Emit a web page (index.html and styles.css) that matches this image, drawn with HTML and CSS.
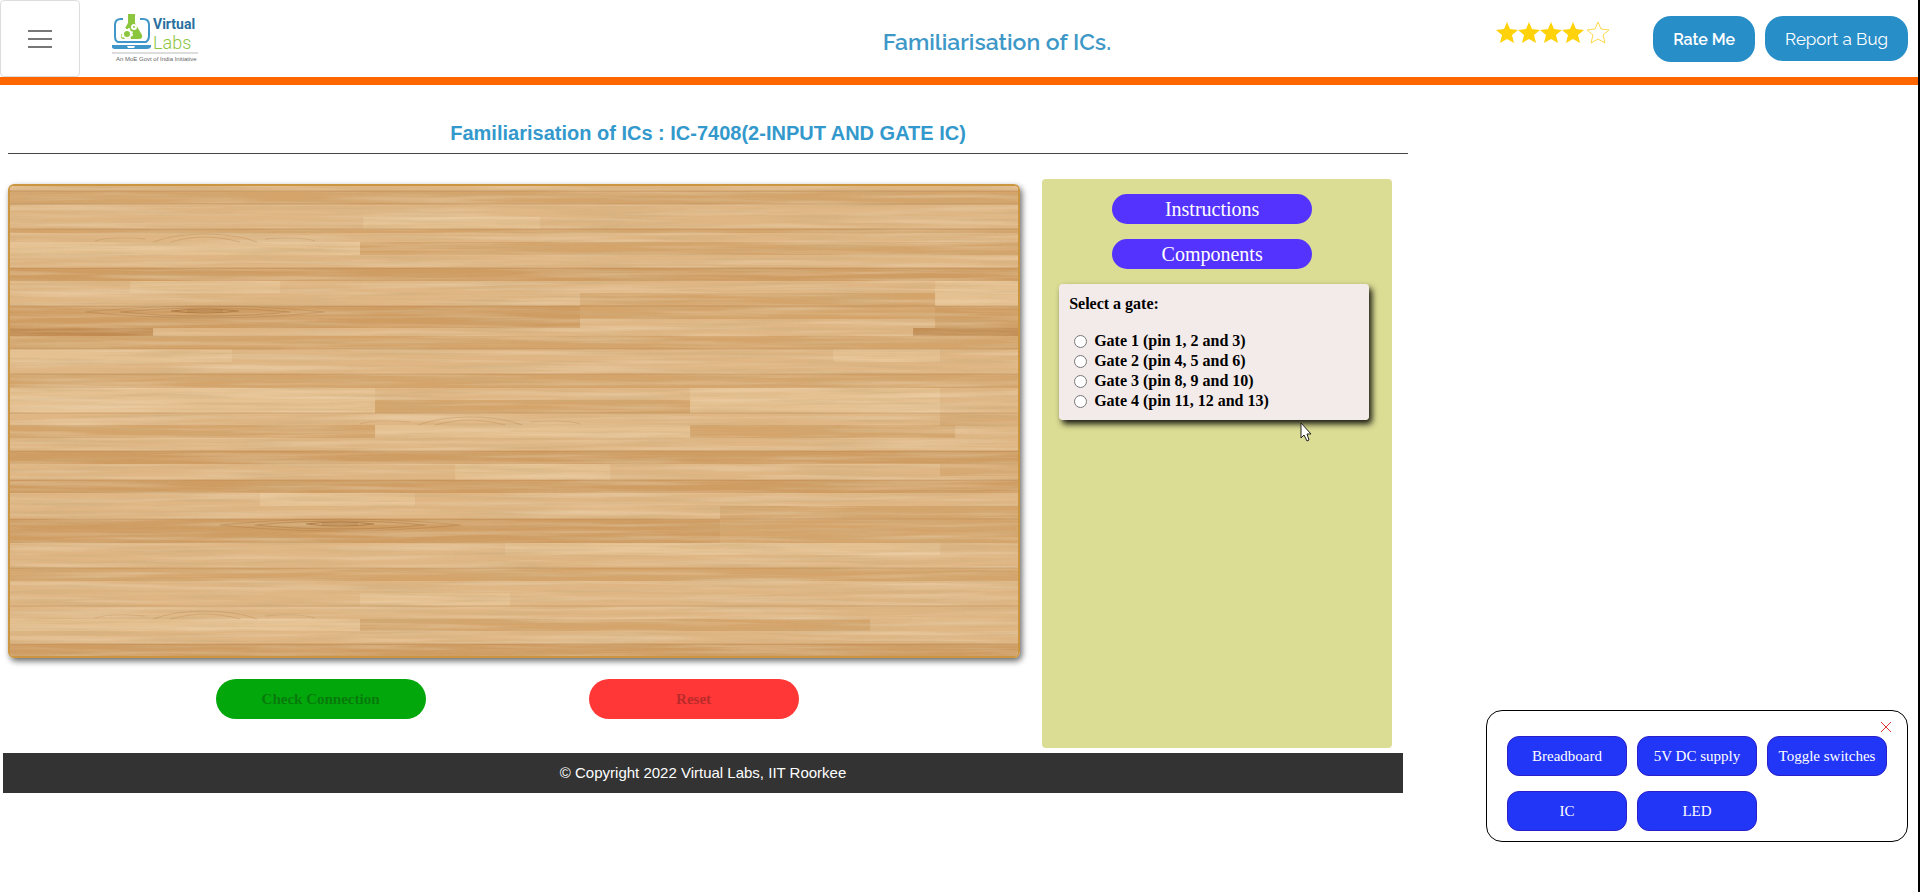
FILE: index.html
```html
<!DOCTYPE html>
<html lang="en">
<head>
<meta charset="utf-8">
<title>Familiarisation of ICs</title>
<link rel="stylesheet" href="styles.css">
</head>
<body>
<header class="topbar">
  <div class="brand">
    <button class="menu" type="button" aria-label="Menu">
      <svg width="24" height="20" viewBox="0 0 24 20"><path d="M0 2H24M0 10H24M0 18H24" stroke="#777" stroke-width="2"/></svg>
    </button>
    <svg class="logo" width="88" height="52" viewBox="0 0 88 52" role="img" aria-label="Virtual Labs">
      <path d="M11 5H9Q3 5 3 11V22Q3 27 6 28H34Q37 26 37 22V11Q37 5 31 5H28" fill="none" stroke="#3f96c8" stroke-width="2"/>
      <path d="M0 31H39V33Q38 35 35 35H4Q0 35 0 33Z" fill="#3f96c8"/>
      <path d="M15 32H23L22 34H16Z" fill="#fff"/>
      <path d="M16 0H23V9L30 21Q31 25 27 25H12Q8 25 9 21L16 9Z" fill="#8cc63f"/>
      <circle cx="15" cy="20" r="4" fill="none" stroke="#fff" stroke-width="2"/>
      <circle cx="15" cy="20" r="5" fill="none" stroke="#fff" stroke-width="2" stroke-dasharray="2 2"/>
      <circle cx="22" cy="13" r="2" fill="#8cc63f" stroke="#fff" stroke-width="2"/>
      <text class="logo-virtual" x="41" y="15">Virtual</text>
      <text class="logo-labs" x="41" y="35">Labs</text>
      <path d="M0 39H86" stroke="#bbb"/>
      <text class="logo-tag" x="4" y="47">An MoE Govt of India Initiative</text>
    </svg>
  </div>
  <h1 class="title">Familiarisation of ICs.</h1>
  <div class="actions">
    <svg class="stars" width="116" height="24" viewBox="0 0 116 24" role="img" aria-label="4 out of 5 stars">
      <defs><path id="star" d="M0-11L3-4L11-3L5 2L7 10L0 6L-7 10L-5 2L-11-3L-3-4Z"/></defs>
      <g fill="#ffd20a"><use href="#star" x="12" y="12"/><use href="#star" x="34" y="12"/><use href="#star" x="56" y="12"/><use href="#star" x="78" y="12"/></g>
      <use href="#star" x="103" y="12" fill="#fff" stroke="#ffd84a"/>
    </svg>
    <button class="pill rate" type="button">Rate Me</button>
    <button class="pill" type="button">Report a Bug</button>
  </div>
</header>

<main class="experiment">
  <h2 class="heading">Familiarisation of ICs : IC-7408(2-INPUT AND GATE IC)</h2>
  <div class="workspace">
    <section class="bench">
      <div class="board">
        <svg class="wood" viewBox="0 0 1008 470" preserveAspectRatio="none" aria-hidden="true">
          <defs>
            <filter id="grain" x="0" y="0" width="100%" height="100%">
              <feTurbulence type="fractalNoise" baseFrequency=".009 .24" numOctaves="4" seed="8"/>
              <feColorMatrix values="0 0 0 0 .62  0 0 0 0 .42  0 0 0 0 .2  1.6 0 0 0 -.66"/>
            </filter>
            <filter id="glow" x="0" y="0" width="100%" height="100%">
              <feTurbulence type="fractalNoise" baseFrequency=".006 .2" numOctaves="3" seed="21"/>
              <feColorMatrix values="0 0 0 0 .96  0 0 0 0 .84  0 0 0 0 .66  1.4 0 0 0 -.6"/>
            </filter>
            <g id="knot" fill="none" stroke="#a9753e">
              <path d="M-120 1Q-60-5 0-5T120 1Q60 7 0 7T-120 1Z" opacity=".35"/>
              <path d="M-85 1Q-45-3 0-3T85 1Q45 5 0 5T-85 1Z" opacity=".45"/>
              <path d="M-34 0Q0-4 34 0Q0 4-34 0ZM-18 0H18" opacity=".8"/>
            </g>
            <g id="arch" fill="none" stroke="#b9894f" opacity=".35">
              <path d="M-52 6Q-30-2 0-2T52 6M-35 6Q-15 1 0 1T35 6M-110 5Q-95 0-60 3M110 5Q95 0 60 3"/>
            </g>
          </defs>
          <rect width="1008" height="470" fill="#dfb684"/>
          <g fill="#d4a46b">
            <path d="M0 5H1008V18H0ZM0 43H1008V47H0ZM350 56H862V69H350ZM862 56H1008V69H862ZM570 107H930V133H570ZM0 150H1008V163H0ZM0 188H1008V202H0ZM365 214H680V227H365ZM0 239H365V252H0ZM680 239H945V252H680ZM710 320H1008V357H710ZM0 382H1008V395H0ZM350 433H860V445H350Z"/>
          </g>
          <g fill="#cf9c62">
            <path d="M0 82H1008V95H0ZM0 120H570V142H0ZM925 120H1008V142H925ZM0 265H1008V278H0ZM0 294H1008V307H0ZM0 333H710V357H0ZM0 458H1008V470H0ZM900 43H1008V44H900Z"/>
            <path d="M930 227H1008V240H930ZM930 278H1008V290H930Z" opacity=".5"/>
          </g>
          <path d="M0 142H143V150H0ZM903 142H1008V150H903Z" fill="#c18a50"/>
          <path d="M0 56H350V69H0ZM353 31H530V43H353ZM120 95H270V107H120ZM0 163H222V176H0ZM823 163H930V176H823ZM0 202H365V227H0ZM680 202H930V227H680ZM365 239H680V252H365ZM445 278H600V294H445ZM250 307H405V320H250ZM495 357H930V369H495ZM350 407H500V420H350ZM0 433H350V445H0ZM925 95H1008V120H925Z" fill="#e5c090"/>
          <rect width="1008" height="470" filter="url(#grain)" opacity=".8"/>
          <rect width="1008" height="470" filter="url(#glow)" opacity=".5"/>
          <g stroke="#b17d45" opacity=".4" stroke-width="1">
            <path d="M0 5H1008M0 18H1008M0 43H1008M0 82H1008M0 120H1008M0 163H1008M0 188H1008M0 227H1008M0 265H1008M0 294H1008M0 333H1008M0 382H1008M0 420H1008M0 458H1008"/>
          </g>
          <use href="#knot" x="195" y="125"/><use href="#knot" x="330" y="338"/>
          <use href="#arch" x="195" y="50"/><use href="#arch" x="195" y="427"/><use href="#arch" x="460" y="233"/>
        </svg>
      </div>
      <div class="controls">
        <button class="control check" type="button" disabled>Check Connection</button>
        <button class="control reset" type="button" disabled>Reset</button>
      </div>
    </section>
    <aside class="side">
      <button class="side-button" type="button">Instructions</button>
      <button class="side-button" type="button">Components</button>
      <fieldset class="gates">
        <legend class="gates-title">Select a gate:</legend>
        <label class="gate"><input type="radio" name="gate">Gate 1 (pin 1, 2 and 3)</label>
        <label class="gate"><input type="radio" name="gate">Gate 2 (pin 4, 5 and 6)</label>
        <label class="gate"><input type="radio" name="gate">Gate 3 (pin 8, 9 and 10)</label>
        <label class="gate"><input type="radio" name="gate">Gate 4 (pin 11, 12 and 13)</label>
        <svg class="cursor" width="12" height="20" viewBox="0 0 12 20" aria-hidden="true"><path d="M1 1V16L4 13L7 19L9 18L7 12H11Z" fill="#fff" stroke="#222"/></svg>
      </fieldset>
    </aside>
  </div>
</main>
<footer class="footer">© Copyright 2022 Virtual Labs, IIT Roorkee</footer>

<section class="palette" aria-label="Components">
  <button class="close" type="button" aria-label="Close">
    <svg width="12" height="12" viewBox="0 0 12 12"><path d="M1 1L11 11M11 1L1 11" stroke="#d33"/></svg>
  </button>
  <div class="parts">
    <button class="part" type="button">Breadboard</button>
    <button class="part" type="button">5V DC supply</button>
    <button class="part" type="button">Toggle switches</button>
    <button class="part" type="button">IC</button>
    <button class="part" type="button">LED</button>
  </div>
</section>
</body>
</html>
```
FILE: styles.css
```css
* { box-sizing: border-box; }

body {
  margin: 0;
  min-height: 100vh;
  border-right: 2px solid #000;
  background: #fff;
  font-family: "Liberation Serif", serif;
  font-size: 16px;
}

button { font-family: inherit; padding: 0; border: 0; }

.topbar {
  display: grid;
  grid-template-columns: 26% 1fr auto;
  border-bottom: 8px solid #f60;
}

.brand { display: flex; align-items: flex-start; gap: 32px; }

.menu {
  display: flex;
  align-items: center;
  justify-content: center;
  width: 80px;
  height: 77px;
  border: 1px solid #ddd;
  border-radius: 4px;
  background: #fff;
}

.logo { margin-top: 14px; }
.logo-virtual { font: bold 14px Roboto, sans-serif; fill: #2a6f9e; }
.logo-labs { font: 300 18px Roboto, sans-serif; fill: #8cc63f; }
.logo-tag { font: 6px "Liberation Sans", sans-serif; fill: #666; }

.title {
  margin: 0;
  align-self: center;
  padding-top: 6px;
  text-align: center;
  font: 600 23px/32px Raleway, Lato, sans-serif;
  color: #3e98c7;
}

.actions {
  display: flex;
  align-items: flex-start;
  gap: 10px;
  padding: 16px 10px 0 0;
  font-family: Raleway, Lato, sans-serif;
}

.stars { margin: 5px 32px 0 0; }

.pill {
  height: 45px;
  padding: 0 20px;
  border-radius: 18px;
  background: #288ec8;
  color: #fff;
  font-size: 17px;
}

.rate { height: 46px; font-size: 16px; font-weight: 600; }

.experiment { width: 73%; margin-left: 8px; padding-top: 34px; }

.heading {
  margin: 0;
  padding-bottom: 6px;
  border-bottom: 1px solid #444;
  text-align: center;
  font: bold 20px/28px "Liberation Sans", Arial, sans-serif;
  color: #3399cc;
}

.workspace {
  display: flex;
  align-items: stretch;
  gap: 22px;
  padding: 25px 16px 0 0;
}

.bench { flex: 1; padding-top: 5px; }

.board {
  border: 2px solid #cc9640;
  border-radius: 6px;
  overflow: hidden;
  box-shadow: 2px 3px 6px rgba(0, 0, 0, .6);
}

.wood { display: block; width: 100%; height: 470px; }

.controls {
  display: flex;
  justify-content: center;
  gap: 163px;
  padding: 21px 14px 0 0;
}

.control {
  width: 210px;
  height: 40px;
  border-radius: 20px;
  font-size: 15px;
  font-weight: bold;
}

.check { background: #02a80b; color: #077a0c; }
.reset { background: #ff3737; color: #ba2b2b; }

.side {
  display: flex;
  flex-direction: column;
  align-items: center;
  gap: 15px;
  width: 350px;
  min-height: 569px;
  padding: 15px 0;
  border-radius: 4px;
  background: #dbdd94;
}

.side-button {
  width: 200px;
  height: 30px;
  margin-right: 10px;
  border-radius: 15px;
  background: #53f;
  color: #fff;
  font-size: 20px;
}

.gates {
  position: relative;
  width: 310px;
  margin: 0 6px 0 0;
  padding: 11px 10px 9px;
  border: 0;
  border-radius: 4px;
  background: #f3ebea;
  box-shadow: 3px 4px 6px rgba(0, 0, 0, .9);
  font-weight: bold;
}

.gates-title { float: left; width: 100%; padding: 0; margin-bottom: 18px; line-height: 18px; }

.gate { display: flex; align-items: center; height: 20px; clear: both; }
.gate input { width: 13px; height: 13px; margin: 0 7px 0 5px; }

.cursor { position: absolute; left: 241px; bottom: -22px; }

.footer {
  width: 73%;
  margin: 5px 0 0 3px;
  background: #333;
  color: #fff;
  text-align: center;
  font: 15px/40px "Liberation Sans", Arial, sans-serif;
}

.palette {
  position: fixed;
  right: 12px;
  bottom: 50px;
  padding: 10px 20px;
  border: 1px solid #000;
  border-radius: 16px;
  background: #fff;
}

.close { display: block; margin: 0 -5px 3px auto; height: 12px; background: none; }
.close svg { display: block; }

.parts { display: grid; grid-template-columns: repeat(3, 120px); gap: 15px 10px; }

.part {
  height: 40px;
  border: 1px solid #2a1fc8;
  border-radius: 12px;
  background: #2236f8;
  color: #fff;
  font-size: 15px;
}
```
